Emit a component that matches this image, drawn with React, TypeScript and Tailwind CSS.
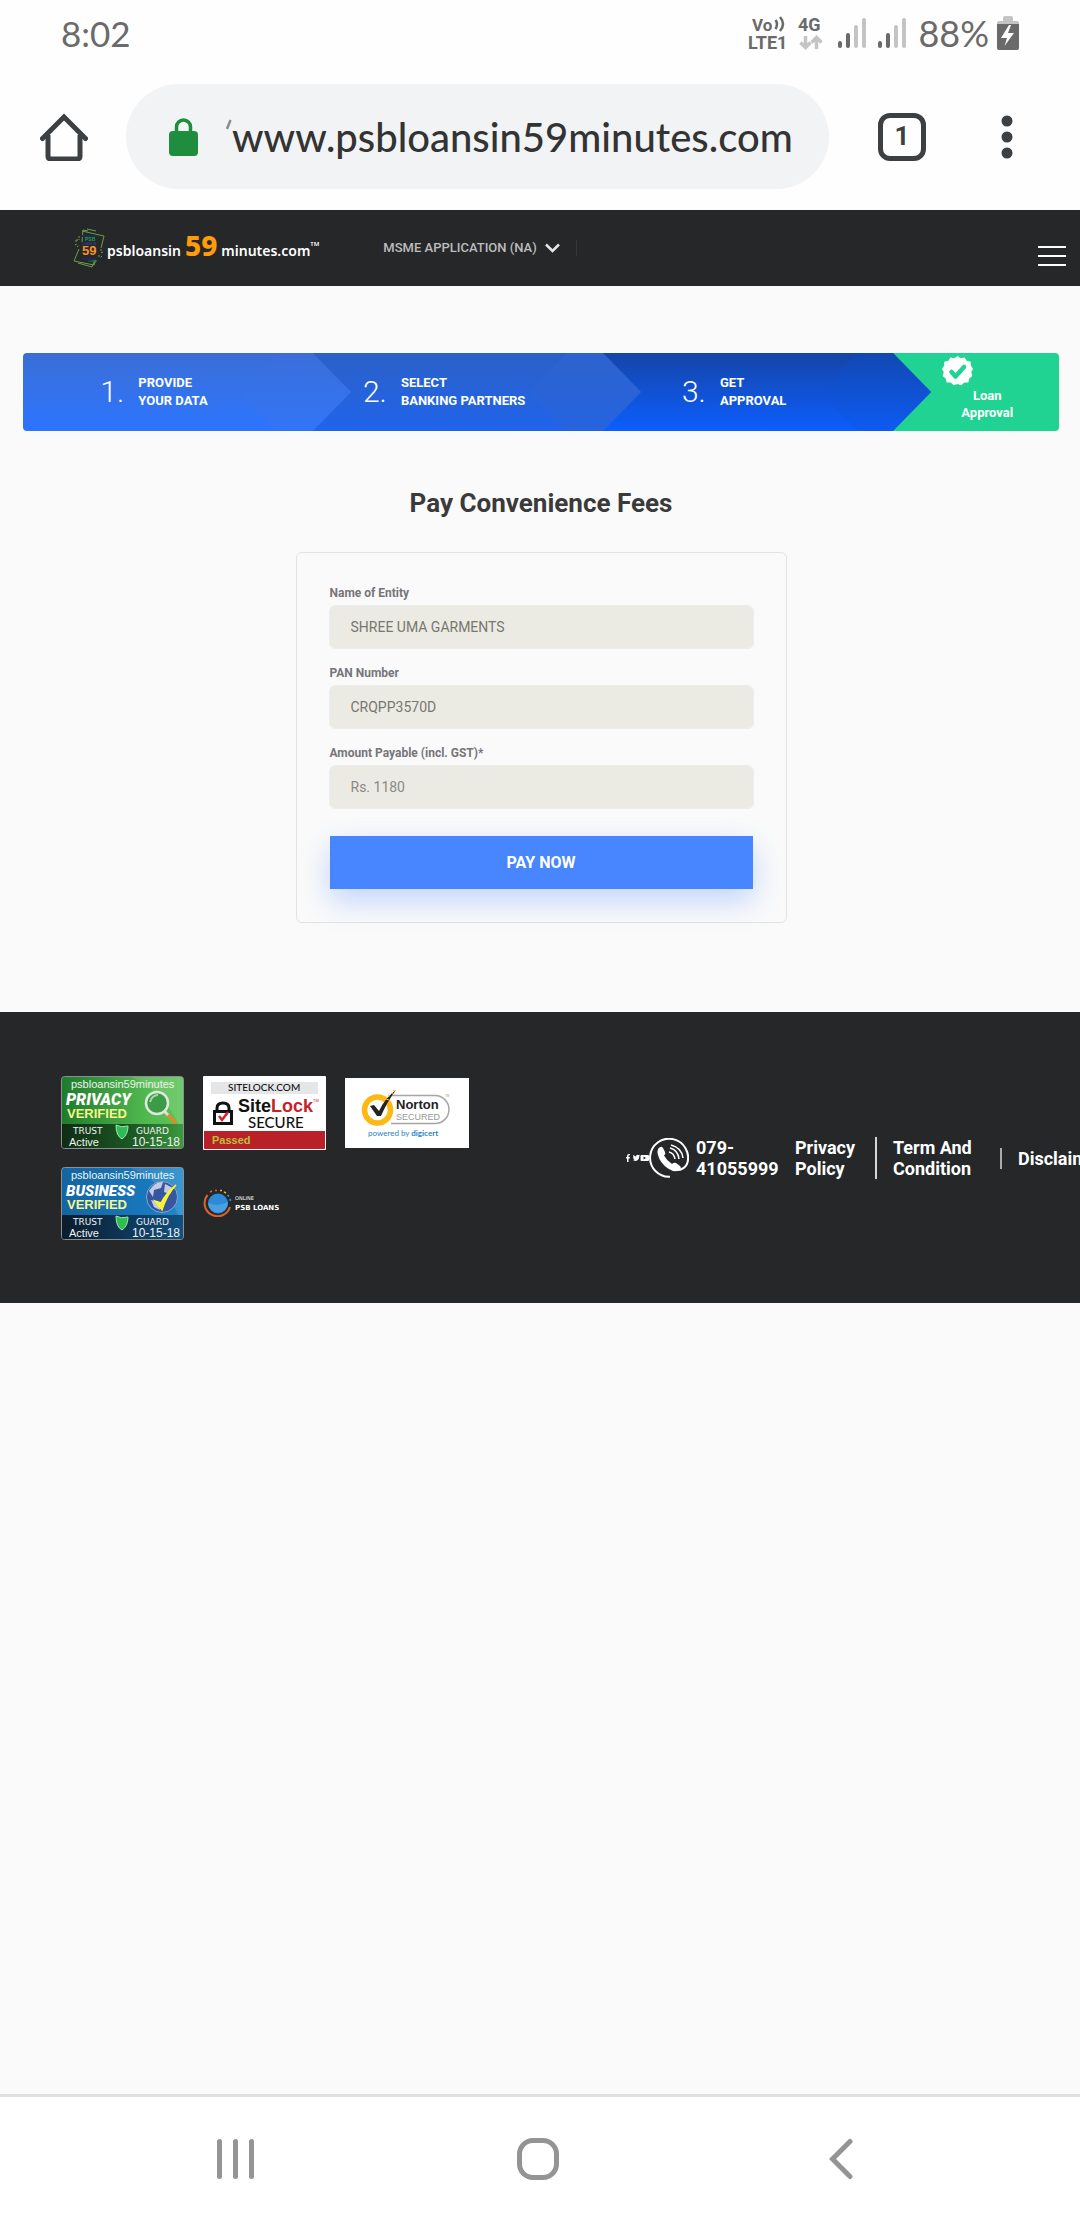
import React from "react";

const roboto = "font-['Roboto',sans-serif]";

function SignalBars() {
  return (
    <svg viewBox="0 0 28 30" className="h-[30px] w-7" aria-hidden="true">
      <rect x="0" y="23" width="4" height="7" rx="2" fill="#6a6a6a" />
      <rect x="8" y="15" width="4" height="15" rx="2" fill="#6a6a6a" />
      <rect x="16" y="7" width="4" height="23" rx="2" fill="#c4c4c4" />
      <rect x="24" y="0" width="4" height="30" rx="2" fill="#c4c4c4" />
    </svg>
  );
}

function StatusBar() {
  return (
    <div className="flex h-[66px] items-center justify-between pl-[61px] pr-[61px] font-['Lato',sans-serif] leading-none text-[#6a6a6a]">
      <span className="text-[35px]">8:02</span>
      <div className="flex items-center">
        <svg viewBox="0 0 40 42" className="h-[42px] w-10" aria-hidden="true" fill="#6a6a6a">
          <g className="font-['Roboto',sans-serif] font-bold">
            <text x="4" y="19" fontSize="17">Vo</text>
            <text x="0" y="37" fontSize="18">LTE1</text>
          </g>
          <path d="M27.500 8q3 4 0 9M32 5q6 7 0 14" fill="none" stroke="#6a6a6a" strokeWidth="2.500" />
        </svg>
        <svg viewBox="0 0 28 42" className="ml-2.5 h-[42px] w-7" aria-hidden="true">
          <text x="0" y="19" fontSize="18" fill="#6a6a6a" className="font-['Roboto',sans-serif] font-bold">4G</text>
          <path d="M7.500 24v11M2.500 30.500l5 5 5-5M18.500 37V26M13.500 30.500l5-5 5 5" fill="none" stroke="#c4c4c4" strokeWidth="3.500" />
        </svg>
        <span className="ml-3 flex gap-3">
          <SignalBars />
          <SignalBars />
        </span>
        <span className="ml-3 text-[36px]">88%</span>
        <svg viewBox="0 0 22 34" className="ml-2 h-[34px] w-[22px]" aria-hidden="true">
          <path d="M6 2q0-2 2-2h6q2 0 2 2v3h4q2 0 2 2v3H0V7q0-2 2-2h4z" fill="#c4c4c4" />
          <path d="M0 8h22v24q0 2-2 2H2q-2 0-2-2z" fill="#6a6a6a" />
          <path d="M12 9L4 22h6L7.500 30 17 17h-6l3-8z" fill="#fff" />
        </svg>
      </div>
    </div>
  );
}

function BrowserBar() {
  return (
    <div className="flex h-36 items-center pb-[3px] pl-10 pr-[67px]">
      <button aria-label="Home">
        <svg viewBox="0 0 48 48" className="size-12" fill="none" stroke="#3c4043" strokeWidth="5">
          <path d="M8 22v21q0 3 3 3h26q3 0 3-3V22" />
          <path d="M2.500 25.500L24 4l21.500 21.500" strokeLinecap="round" />
        </svg>
      </button>
      <div className="ml-[38px] flex h-[105px] min-w-0 flex-1 items-center rounded-full bg-[#f1f3f5] pl-[43px] pr-5">
        <svg viewBox="0 0 29 38" className="h-[38px] w-[29px] shrink-0" aria-hidden="true">
          <rect x="0" y="13" width="29" height="25" rx="4" fill="#1e8e3e" />
          <path d="M7.500 15V9a7 7 0 0 1 14 0v6" fill="none" stroke="#1e8e3e" strokeWidth="3.500" />
        </svg>
        <svg viewBox="0 0 6 38" className="ml-7 h-[38px] w-1.5 shrink-0" aria-hidden="true">
          <path d="M4.500 2L1 11" stroke="#8d8d8f" strokeWidth="2.500" />
        </svg>
        <input
          aria-label="Address"
          defaultValue="www.psbloansin59minutes.com"
          className="min-w-0 flex-1 bg-transparent font-['Lato',sans-serif] text-[40px] font-medium text-[#333] outline-none"
        />
      </div>
      <button
        aria-label="1 open tab"
        className={`ml-[49px] flex size-12 items-center justify-center rounded-xl border-5 border-[#3c4043] text-[26px] font-bold text-[#3c4043] ${roboto}`}
      >
        1
      </button>
      <button aria-label="More options" className="ml-[75px]">
        <svg viewBox="0 0 12 44" className="h-11 w-3" fill="#3c4043">
          <circle cx="6" cy="6" r="5.500" />
          <circle cx="6" cy="22" r="5.500" />
          <circle cx="6" cy="38" r="5.500" />
        </svg>
      </button>
    </div>
  );
}

function LogoMark() {
  return (
    <svg viewBox="0 0 32 40" className="h-10 w-8" aria-hidden="true">
      <g fill="none" stroke="#6c9f43" strokeWidth="1">
        <path d="M9 3l22 5-3 12M9 14L10 2l5 1M14 1l9 2" />
        <path d="M6 21L1 33l20 4 2-5M5 35l14 4 3-8" />
        <path d="M4 11v3M2 13h3M6 8v4M2 17l2-1M4 19l2-2M28 21v3M30 24l-3 1M26 27v3M29 28l-2 2" strokeDasharray="2 1" />
      </g>
      <path d="M9 8h15M9 31h14" stroke="#25255e" strokeWidth="2" />
      <g className="font-['Liberation_Sans',sans-serif] font-bold">
        <text x="12" y="13" fontSize="5" fill="#13a34a">PSB</text>
        <text x="9" y="17" fontSize="3" fill="#3a3a9b">LOANS IN</text>
        <text x="9" y="27" fontSize="13" fill="#f7941d">59</text>
        <text x="15" y="34" fontSize="4" fill="#13803c">.com</text>
      </g>
    </svg>
  );
}

function SiteHeader() {
  return (
    <header className="flex h-[76px] items-center bg-[#252729] pl-[73px] pr-3.5">
      <a href="#home" className="flex items-center font-['Noto_Sans',sans-serif] text-[14px] font-semibold leading-none text-white">
        <LogoMark />
        <span className="ml-0.5 flex items-baseline gap-1 pb-1.5">
          psbloansin
          <span className="text-[28px] font-extrabold leading-none text-[#ff9c0b]">59</span>
          <span className="flex">
            minutes.com<sup className="top-0 text-[6px]">TM</sup>
          </span>
        </span>
      </a>
      <button className={`ml-16 flex items-center gap-2 text-[13px] font-medium text-[#bdbdbd] ${roboto}`}>
        MSME APPLICATION (NA)
        <svg viewBox="0 0 15 10" className="h-2.5 w-[15px]" fill="none" stroke="#e6e6e6" strokeWidth="2.500">
          <path d="M1 1.500l6.500 6.500L14 1.500" />
        </svg>
      </button>
      <span className="ml-4 h-4 w-px bg-[#34363a]" />
      <button aria-label="Menu" className="ml-auto mt-4 flex w-7 flex-col gap-[7px]">
        <span className="h-0.5 bg-white" />
        <span className="h-0.5 bg-white" />
        <span className="h-0.5 bg-white" />
      </button>
    </header>
  );
}

const steps = [
  { no: "1.", a: "PROVIDE", b: "YOUR DATA", bg: "from-[#3a6ed7] to-[#2c75ff]", tip: "from-[#3a6ed9] to-[#3275f8]", z: "z-30" },
  { no: "2.", a: "SELECT", b: "BANKING PARTNERS", bg: "from-[#2b60c8] to-[#2064eb]", tip: "from-[#2d63cd] to-[#2563e0]", z: "z-20" },
  { no: "3.", a: "GET", b: "APPROVAL", bg: "from-[#1445a8] to-[#0b5eff]", tip: "from-[#1148b2] to-[#0d5bf3]", z: "z-10" },
];

function Steps() {
  return (
    <ol className={`flex h-[78px] overflow-hidden rounded text-[13px] font-bold text-white ${roboto}`}>
      {steps.map((s) => (
        <li key={s.no} className={`relative flex w-[28%] items-center justify-center bg-linear-to-b pr-7 ${s.bg} ${s.z}`}>
          <span className="w-[38px] text-[30px] font-light leading-none">{s.no}</span>
          <span className="leading-[18px]">
            {s.a}
            <br />
            {s.b}
          </span>
          <span
            className={`absolute inset-y-0 -right-[38px] w-28 bg-linear-to-b [clip-path:polygon(34%_0,66%_0,100%_50%,66%_100%,34%_100%,0_50%)] ${s.tip}`}
          />
        </li>
      ))}
      <li className="flex w-[16%] flex-col bg-[#21d392] pl-[49px] pt-[3px]">
        <svg viewBox="0 0 31 31" className="size-[31px]" aria-hidden="true">
          <path
            d="M15.500 0l3.200 2.300L22.600 1.500l2.100 3.300 4 .9.200 4 2.100 3.200L29.300 16l1 3.900-3 2.600-1 3.900-4 .2-3 2.700-3.800-1.400-3.800 1.400-3-2.700-4-.2-1-3.900-3-2.600 1-3.900L0 12.900l2.100-3.200.2-4 4-.9 2.100-3.300 3.900.8z"
            fill="#fff"
          />
          <path d="M9.500 16l4 4.500L22 11" fill="none" stroke="#21d392" strokeWidth="4.500" strokeLinecap="round" strokeLinejoin="round" />
        </svg>
        <span className="w-[90px] text-center leading-[17px]">
          Loan
          <br />
          Approval
        </span>
      </li>
    </ol>
  );
}

const fields = [
  { id: "entity", label: "Name of Entity", value: "SHREE UMA GARMENTS", tone: "text-[#77776f]" },
  { id: "pan", label: "PAN Number", value: "CRQPP3570D", tone: "text-[#77776f]" },
  { id: "amount", label: "Amount Payable (incl. GST)*", value: "Rs. 1180", tone: "text-[#8a8a84]" },
];

function PayForm() {
  return (
    <form className="mx-auto mt-[33px] w-[491px] max-w-full rounded-md border border-[#e2e3e3] px-[33px] pb-[33px] pt-[31px]">
      <div className="flex flex-col gap-4">
        {fields.map((f) => (
          <div key={f.id}>
            <label htmlFor={f.id} className="block h-5 text-[12px] font-bold leading-[18px] text-[#75757a]">
              {f.label}
            </label>
            <input
              id={f.id}
              defaultValue={f.value}
              className={`mt-0.5 block h-[42px] w-full rounded-[5px] bg-[#ebebe4] px-[21px] text-[14px] outline-1 outline-[#ebedf0] ${f.tone}`}
            />
          </div>
        ))}
      </div>
      <button
        type="button"
        className="mt-7 block h-[53px] w-full bg-[#4886ff] text-[16px] font-bold text-white shadow-[0_12px_30px_rgba(72,134,255,0.32)]"
      >
        PAY NOW
      </button>
    </form>
  );
}

function TrustBadge({ kind }: { kind: "privacy" | "business" }) {
  const green = kind === "privacy";
  const id = `trust-${kind}`;
  return (
    <svg viewBox="0 0 124 73" className="h-[73px] w-[124px]" role="img" aria-label={`Trust Guard ${kind} verified`}>
      <defs>
        <linearGradient id={id} x1="0" y1="0" x2="1" y2="0">
          <stop offset="0" stopColor={green ? "#1f7a2d" : "#1564a0"} />
          <stop offset="0.7" stopColor={green ? "#52b950" : "#1778bd"} />
          <stop offset="1" stopColor={green ? "#5ec458" : "#1f8acb"} />
        </linearGradient>
        <linearGradient id={`${id}-foot`} x1="0" y1="0" x2="1" y2="0">
          <stop offset="0" stopColor={green ? "#0f2c13" : "#0b1c2c"} />
          <stop offset="0.6" stopColor={green ? "#1c5a25" : "#0e3a5e"} />
          <stop offset="1" stopColor={green ? "#3c9a3f" : "#12507f"} />
        </linearGradient>
      </defs>
      <rect x="0.500" y="0.500" width="122" height="72" rx="3" fill={`url(#${id})`} stroke="#8a8f92" />
      <path d="M70 1h50q2 0 2 2v60Q112 20 70 1z" fill="#fff" opacity="0.12" />
      <path d="M1 48h121v22q0 2-2 2H3q-2 0-2-2z" fill={`url(#${id}-foot)`} />
      <g className="font-['Liberation_Sans',sans-serif]">
        <text x="10" y="12" fontSize="11" fill="#eef4ee">psbloansin59minutes</text>
        <text x="8" y="70" fontSize="11" fill="#f2f2f2">Active</text>
        <text x="71" y="70" fontSize="12" fill="#f2f2f2">10-15-18</text>
      </g>
      <text x="5" y="29" fontSize={green ? 16 : 15} fill="#fff" className="font-['Roboto',sans-serif] font-black italic">
        {green ? "PRIVACY" : "BUSINESS"}
      </text>
      <text x="6" y="42" fontSize="13" fill="#f7f78b" className="font-['Liberation_Sans',sans-serif] font-bold">VERIFIED</text>
      <g fontSize="9" fill="#f2f2f2" className="font-['DejaVu_Sans',sans-serif]">
        <text x="12" y="58">TRUST</text>
        <text x="75" y="58">GUARD</text>
      </g>
      <path d="M55 49q5 3 12 1 0 9-6 13-6-3-6-14z" fill="#2dbd52" stroke="#9fe8a8" strokeWidth="1" />
      {green ? (
        <g>
          <path d="M105 37l9 9" stroke="#e28a2b" strokeWidth="3.500" strokeLinecap="round" />
          <path d="M103 35l4 4" stroke="#ddd" strokeWidth="3" />
          <circle cx="96" cy="27" r="11" fill="#3d9a46" stroke="#dfe8df" strokeWidth="2.500" />
          <path d="M89 26q2-7 8-7" stroke="#a6d9a6" strokeWidth="2" fill="none" />
        </g>
      ) : (
        <g>
          <circle cx="101" cy="30" r="15.500" fill="#35579f" stroke="#87a5d3" />
          <path d="M88 24q6-10 14-9l-2 6-7 2-1 7zM104 17l8 4-3 6-6-2zM90 33l8 2 1 8-6-3z" fill="#c3cbe2" />
          <path d="M94 34l7 9q5-16 14-25-10 8-15 18z" fill="#fbf236" stroke="#fbf236" strokeWidth="1.500" />
        </g>
      )}
    </svg>
  );
}

function SiteLockBadge() {
  return (
    <svg viewBox="0 0 124 74" className="h-[74px] w-[124px]" role="img" aria-label="SiteLock secure">
      <rect width="123" height="74" rx="1" fill="#fff" />
      <rect x="8" y="6" width="107" height="12" fill="#e4e6e8" />
      <path d="M1 55h121v17q0 1-1 1H2q-1 0-1-1z" fill="#ba2027" />
      <g className="font-['Lato',sans-serif]" fill="#111">
        <text x="25" y="15" fontSize="10" className="font-medium">SITELOCK.COM</text>
        <text x="45" y="52" fontSize="15" className="font-medium">SECURE</text>
      </g>
      <text x="35" y="36" fontSize="18" className="font-['Liberation_Sans',sans-serif] font-bold" fill="#111">
        Site<tspan fill="#c4232b">Lock</tspan>
      </text>
      <text x="110" y="26" fontSize="4" fill="#c4232b" className="font-['Liberation_Sans',sans-serif]">TM</text>
      <text x="9" y="68" fontSize="11" className="font-['Liberation_Sans',sans-serif] font-bold" fill="#b5c13c">Passed</text>
      <rect x="11.500" y="35.500" width="17" height="12" fill="#fff" stroke="#111" strokeWidth="3" />
      <path d="M14 35v-3q0-5 6-5t6 5v3" fill="none" stroke="#111" strokeWidth="3" />
      <path d="M16 40l3 4 6-8" fill="none" stroke="#d2232a" strokeWidth="2.500" />
    </svg>
  );
}

function NortonBadge() {
  return (
    <svg viewBox="0 0 124 70" className="h-[70px] w-[124px]" role="img" aria-label="Norton secured, powered by digicert">
      <rect width="124" height="70" fill="#fff" />
      <path d="M46 17.500h44a14 14 0 0 1 0 28H46" fill="none" stroke="#a5a5a5" strokeWidth="1.500" />
      <circle cx="32.500" cy="32" r="13" fill="#fff" stroke="#fdb813" strokeWidth="5.500" />
      <path d="M25 28l4-1 5 6Q40 20 51 12q-9 12-15 26h-4z" fill="#222" />
      <path d="M43 17l2 1M46 15l2 1M48 12l2 1M41 21l3 1" stroke="#fdb813" strokeWidth="1" />
      <g className="font-['Liberation_Sans',sans-serif]">
        <text x="51" y="31" fontSize="13" fill="#222" className="font-bold">Norton</text>
        <text x="51" y="42" fontSize="9" fill="#999">SECURED</text>
      </g>
      <text x="100" y="19" fontSize="3" fill="#999" className="font-['Liberation_Sans',sans-serif]">TM</text>
      <text x="23" y="58" fontSize="8" fill="#1d84cc" className="font-['Lato',sans-serif]">
        powered by <tspan className="font-bold">digicert</tspan>
      </text>
    </svg>
  );
}

function PsbLoansBadge() {
  return (
    <svg viewBox="0 0 82 28" className="h-7 w-[82px]" role="img" aria-label="Online PSB Loans">
      <circle cx="15" cy="14.500" r="10" fill="#2b8bd6" />
      <path d="M5 14q10 4 20-1a10 10 0 0 1-20 1z" fill="#4a9fe2" />
      <path d="M4.500 6A13 13 0 1 0 27 18" fill="none" stroke="#e0622a" strokeWidth="2" />
      <path d="M7 3l2-1M12 1.500h2" stroke="#e0622a" strokeWidth="1.500" />
      <path d="M17 1.500h2M21 3l2 1" stroke="#e5b52d" strokeWidth="1.500" />
      <path d="M24.500 6l1.500 1.500M27 10l.5 2" stroke="#3aa0dd" strokeWidth="1.500" />
      <g fill="#fff" className="font-['DejaVu_Sans',sans-serif]">
        <text x="32" y="11" fontSize="5">ONLINE</text>
        <text x="32" y="21" fontSize="7" className="font-bold">PSB LOANS</text>
      </g>
    </svg>
  );
}

function SocialIcons() {
  return (
    <svg viewBox="0 0 23 8" className="h-2 w-[23px] shrink-0" fill="#fff" aria-hidden="true">
      <path d="M1 8V4.500H0V3h1V2q0-2 2-2h1v1.300H3.200q-.7 0-.7.700v1H4L3.700 4.500H2.500V8z" />
      <path d="M7 1l3 1.500Q10 .8 11.500.8l1 .3 1-.3-.4.8.9 0-.8 1q0 4-3.700 4.400Q8 7.200 7 6.300h1.800L7.500 5z" />
      <path fillRule="evenodd" d="M15.500 1H22q1 0 1 1v4q0 1-1 1h-6.500q-1 0-1-1V2q0-1 1-1zm2 1.500v3L20 4z" />
    </svg>
  );
}

function PhoneIcon() {
  return (
    <svg viewBox="0 0 40 40" className="size-10 shrink-0" fill="none" stroke="#fff" aria-hidden="true">
      <path d="M21 38.700A19 19 0 1 1 38 26Q35 32 28 32" strokeWidth="2" />
      <path d="M9 11q3-4 5-1l2 4q1 2-1 3.500 3 5.500 8 8.500 2-2 4-1l4 3q2 2-1 4-4 3-11-1.500Q11 25 9 17q-1-4 0-6z" fill="#fff" stroke="none" />
      <path d="M20 14q5 1 6 7M21 10q8 2 9 11M22 7q11 3 12 13" strokeWidth="1.500" />
    </svg>
  );
}

function SiteFooter() {
  return (
    <footer className="flex items-center overflow-hidden bg-[#252729] pb-[63px] pl-[61px] pt-16">
      <div className="grid w-[565px] shrink-0 grid-cols-[repeat(3,142px)] gap-y-[17px]">
        <TrustBadge kind="privacy" />
        <SiteLockBadge />
        <span className="pt-0.5"><NortonBadge /></span>
        <TrustBadge kind="business" />
        <span className="pt-[22px]"><PsbLoansBadge /></span>
      </div>
      <nav className="flex items-center text-[18px] font-bold leading-[21px] text-white">
        <SocialIcons />
        <PhoneIcon />
        <a href="tel:07941055999" className="ml-[7px] w-20">
          079-
          <br />
          41055999
        </a>
        <a href="#privacy" className="ml-[19px] w-[82px] border-r-2 border-[#d5d5d5]">
          Privacy
          <br />
          Policy
        </a>
        <a href="#terms" className="ml-4 w-[107px] whitespace-nowrap">
          Term And
          <br />
          Condition
        </a>
        <a href="#disclaimer" className="border-l-2 border-[#aaa] pl-4">
          Disclaimer
        </a>
      </nav>
    </footer>
  );
}

function SystemNav() {
  return (
    <div className="flex h-[126px] items-center border-t-3 border-[#e0e0e0] bg-white pl-[217px] pr-[227px] text-[#949494]">
      <div className="flex flex-1 items-center justify-between">
        <button aria-label="Recent apps" className="flex gap-[11px]">
          <span className="h-10 w-[5px] rounded-full bg-current" />
          <span className="h-10 w-[5px] rounded-full bg-current" />
          <span className="h-10 w-[5px] rounded-full bg-current" />
        </button>
        <button aria-label="Home screen" className="mr-2 size-[42px] rounded-2xl border-5 border-current" />
        <button aria-label="Back">
          <svg viewBox="0 0 24 42" className="h-[42px] w-6" fill="none" stroke="currentColor" strokeWidth="5" strokeLinecap="round">
            <path d="M21 3.500L3.500 21 21 38.500" />
          </svg>
        </button>
      </div>
    </div>
  );
}

export default function App() {
  return (
    <div className={`flex min-h-screen flex-col bg-[#fafafa] ${roboto}`}>
      <div className="bg-[#fefefe]">
        <StatusBar />
        <BrowserBar />
      </div>
      <SiteHeader />
      <main className="pb-[89px] pl-[23px] pr-[21px] pt-[67px]">
        <Steps />
        <h1 className="mt-14 text-center text-[26px] font-bold leading-8 text-[#3a3a3a]">Pay Convenience Fees</h1>
        <PayForm />
      </main>
      <SiteFooter />
      <div className="flex-1" />
      <SystemNav />
    </div>
  );
}
